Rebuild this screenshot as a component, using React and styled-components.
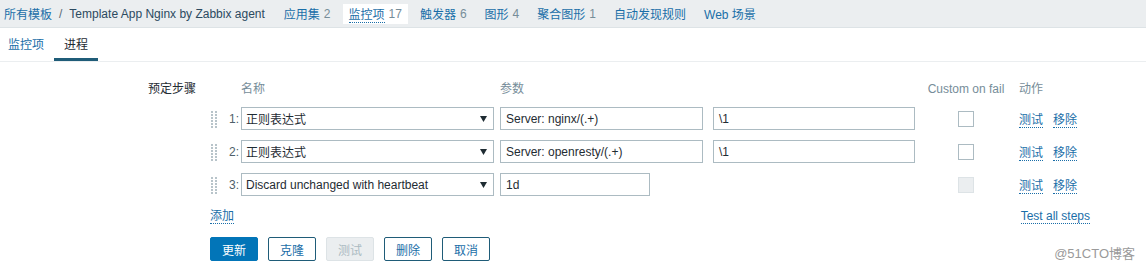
import styled, { createGlobalStyle } from "styled-components";

const Global = createGlobalStyle`
    body {
        margin: 0;
        background: #fff;
        font-family: "Liberation Sans", Arial, "Noto Sans CJK SC", sans-serif;
        font-size: 12px;
        color: #1f2c33;
    }
`;

const Page = styled.div`
    position: relative;
    width: 1146px;
    height: 272px;
    overflow: hidden;
`;

const TopNav = styled.div`
    height: 27px;
    background: #ebeef0;
    border-bottom: 1px solid #dde3e6;
    display: flex;
    align-items: center;
    padding-left: 4px;
`;

const Crumb = styled.span`
    color: ${props => props.dark ? "#2c4a60" : "#1a6ea8"};
`;

const Sep = styled.span`
    color: #5a6a75;
    margin: 0 7px;
`;

const NavItem = styled.span`
    display: flex;
    align-items: center;
    height: 20px;
    padding: 0 6px;
    margin-left: ${props => props.first ? "13px" : "6px"};
    background: ${props => props.active ? "#fff" : "transparent"};
    color: #1a6ea8;
`;

const NavLabel = styled.span`
    border-bottom: ${props => props.active ? "1px dotted #1a6ea8" : "none"};
`;

const Count = styled.span`
    color: #768d99;
    margin-left: 4px;
`;

const Tabs = styled.div`
    display: flex;
    height: 33px;
    border-bottom: 1px solid #ebeef0;
`;

const Tab = styled.div`
    display: flex;
    align-items: center;
    padding: 0 10px;
    margin-left: ${props => props.first ? "-2px" : "0"};
    color: ${props => props.active ? "#1f2c33" : "#1a6ea8"};
    border-bottom: 3px solid ${props => props.active ? "#1f5c78" : "transparent"};
`;

const Form = styled.div`
    display: flex;
    padding-top: 19px;
`;

const Label = styled.div`
    width: 196px;
    padding-right: 14px;
    text-align: right;
    line-height: 16px;
`;

const Body = styled.div`
    display: flex;
    flex-direction: column;
`;

const Steps = styled.div`
    display: grid;
    grid-template-columns: 31px 259px 213px 207px 92px auto;
    row-gap: 10px;
    align-items: center;
`;

const Head = styled.div`
    color: #768d99;
    line-height: 16px;
    text-align: ${props => props.center ? "center" : "left"};
    padding-left: ${props => props.pad || 0};
`;

const Handle = styled.div`
    display: flex;
    align-items: center;
    height: 23px;
`;

const Num = styled.span`
    width: 16px;
    margin-left: 5px;
    text-align: right;
    color: #4f5f6a;
`;

const Select = styled.div`
    width: 253px;
    height: 23px;
    box-sizing: border-box;
    border: 1px solid #acbbc2;
    display: flex;
    align-items: center;
    justify-content: space-between;
    padding: 0 6px 0 4px;
`;

const Input = styled.div`
    width: ${props => props.w}px;
    height: 23px;
    box-sizing: border-box;
    border: 1px solid #acbbc2;
    display: flex;
    align-items: center;
    padding: 0 5px;
`;

const Check = styled.div`
    justify-self: center;
    width: 16px;
    height: 16px;
    box-sizing: border-box;
    border: 1px solid ${props => props.disabled ? "#dde3e6" : "#acbbc2"};
    background: ${props => props.disabled ? "#ebeef0" : "#fff"};
`;

const Actions = styled.div`
    display: flex;
    gap: 10px;
    padding: 3px 0 0 7px;
`;

const Link = styled.span`
    color: #1a6ea8;
    border-bottom: 1px dotted #1a6ea8;
    line-height: 14px;
`;

const Under = styled.div`
    display: flex;
    justify-content: space-between;
    margin-top: 13px;
    width: 880px;
`;

const Buttons = styled.div`
    display: flex;
    gap: 10px;
    margin-top: 13px;
`;

const Button = styled.div`
    width: 48px;
    height: 24px;
    box-sizing: border-box;
    display: flex;
    align-items: center;
    justify-content: center;
    border-radius: 2px;
    border: 1px solid ${props => props.primary ? "#0275b8" : props.disabled ? "#dde3e6" : "#1f5c78"};
    background: ${props => props.primary ? "#0275b8" : props.disabled ? "#ebeef0" : "#fff"};
    color: ${props => props.primary ? "#fff" : props.disabled ? "#acbbc2" : "#1a6ea8"};
`;

const Watermark = styled.div`
    position: absolute;
    right: 11px;
    bottom: 10px;
    font-size: 13px;
    color: #9a9a9a;
`;

const Dots = () => (
    <svg width="8" height="18" viewBox="0 0 8 18">
        {[0, 3, 6, 9, 12, 15].map(y => (
            <g key={y} fill="#b8c4ca">
                <rect x="1" y={y + 1} width="2" height="2" />
                <rect x="5" y={y + 1} width="2" height="2" />
            </g>
        ))}
    </svg>
);

const Arrow = () => (
    <svg width="7" height="6" viewBox="0 0 7 6">
        <path d="M0 0 L7 0 L3.5 6 Z" fill="#1f2c33" />
    </svg>
);

const steps = [
    { n: 1, name: "正则表达式", p1: "Server: nginx/(.+)", p2: "\\1" },
    { n: 2, name: "正则表达式", p1: "Server: openresty/(.+)", p2: "\\1" },
    { n: 3, name: "Discard unchanged with heartbeat", p1: "1d", short: true },
];

const App = () => {
    return (
        <Page>
            <Global />
            <TopNav>
                <Crumb>所有模板</Crumb>
                <Sep>/</Sep>
                <Crumb dark>Template App Nginx by Zabbix agent</Crumb>
                <NavItem first>应用集<Count>2</Count></NavItem>
                <NavItem active><NavLabel active>监控项</NavLabel><Count>17</Count></NavItem>
                <NavItem>触发器<Count>6</Count></NavItem>
                <NavItem>图形<Count>4</Count></NavItem>
                <NavItem>聚合图形<Count>1</Count></NavItem>
                <NavItem>自动发现规则</NavItem>
                <NavItem>Web 场景</NavItem>
            </TopNav>
            <Tabs>
                <Tab first>监控项</Tab>
                <Tab active>进程</Tab>
            </Tabs>
            <Form>
                <Label>预定步骤</Label>
                <Body>
                    <Steps>
                        <div />
                        <Head>名称</Head>
                        <Head>参数</Head>
                        <div />
                        <Head center>Custom on fail</Head>
                        <Head pad="7px">动作</Head>
                        {steps.map(s => [
                            <Handle key={"h" + s.n}>
                                <Dots />
                                <Num>{s.n}:</Num>
                            </Handle>,
                            <Select key={"s" + s.n}>
                                <span>{s.name}</span>
                                <Arrow />
                            </Select>,
                            <Input key={"a" + s.n} w={s.short ? 150 : 203}>{s.p1}</Input>,
                            s.short ? <div key={"b" + s.n} /> : <Input key={"b" + s.n} w={202}>{s.p2}</Input>,
                            <Check key={"c" + s.n} disabled={s.short} />,
                            <Actions key={"x" + s.n}>
                                <Link>测试</Link>
                                <Link>移除</Link>
                            </Actions>,
                        ])}
                    </Steps>
                    <Under>
                        <Link>添加</Link>
                        <Link>Test all steps</Link>
                    </Under>
                    <Buttons>
                        <Button primary>更新</Button>
                        <Button>克隆</Button>
                        <Button disabled>测试</Button>
                        <Button>删除</Button>
                        <Button>取消</Button>
                    </Buttons>
                </Body>
            </Form>
            <Watermark>@51CTO博客</Watermark>
        </Page>
    );
};

export default App;
